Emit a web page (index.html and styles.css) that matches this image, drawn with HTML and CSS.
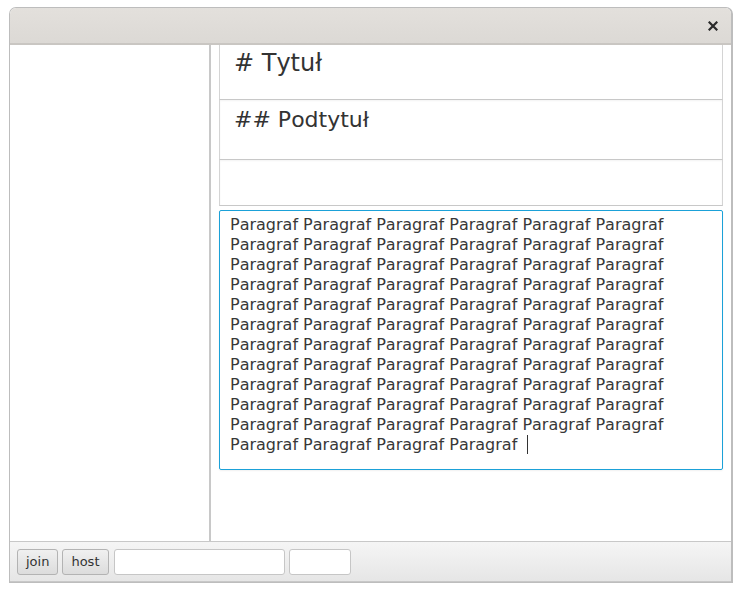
FILE: index.html
```html
<!DOCTYPE html>
<html lang="pl">
<head>
<meta charset="utf-8">
<title>Editor</title>
<link rel="stylesheet" href="styles.css">
</head>
<body>
<div class="window">
  <div class="titlebar">
    <svg class="close" width="10" height="10" viewBox="0 0 10 10"><path d="M1.5 1.5 L8.5 8.5 M8.5 1.5 L1.5 8.5" stroke="#2a2a2a" stroke-width="2.2" stroke-linecap="square"/></svg>
  </div>
  <div class="main">
    <div class="sidebar"></div>
    <div class="content">
      <div class="block block-h1"># Tytuł</div>
      <div class="block block-h2">## Podtytuł</div>
      <div class="block block-empty"></div>
      <div class="para">Paragraf Paragraf Paragraf Paragraf Paragraf Paragraf Paragraf Paragraf Paragraf Paragraf Paragraf Paragraf Paragraf Paragraf Paragraf Paragraf Paragraf Paragraf Paragraf Paragraf Paragraf Paragraf Paragraf Paragraf Paragraf Paragraf Paragraf Paragraf Paragraf Paragraf Paragraf Paragraf Paragraf Paragraf Paragraf Paragraf Paragraf Paragraf Paragraf Paragraf Paragraf Paragraf Paragraf Paragraf Paragraf Paragraf Paragraf Paragraf Paragraf Paragraf Paragraf Paragraf Paragraf Paragraf Paragraf Paragraf Paragraf Paragraf Paragraf Paragraf Paragraf Paragraf Paragraf Paragraf Paragraf Paragraf Paragraf Paragraf Paragraf Paragraf&nbsp;<span class="caret"></span></div>
    </div>
  </div>
  <div class="toolbar">
    <button class="btn">join</button>
    <button class="btn">host</button>
    <div class="field field-wide"></div>
    <div class="field field-narrow"></div>
  </div>
</div>
</body>
</html>
```
FILE: styles.css
```css
* { box-sizing: border-box; }
html, body { margin: 0; padding: 0; background: #ffffff; }
body { font-family: "DejaVu Sans", sans-serif; color: #333333; font-kerning: none; }

.window {
  margin: 7px 0 0 9px;
  width: 724px;
  height: 576px;
  border: 1px solid #bdbdbd;
  border-right-width: 2px;
  border-radius: 7px 7px 0 0;
  display: flex;
  flex-direction: column;
  overflow: hidden;
  background: #ffffff;
}

.titlebar {
  height: 37px;
  flex: none;
  background: linear-gradient(#e3e0dc, #dcd9d5);
  border-bottom: 2px solid #c9c6c2;
  display: flex;
  align-items: center;
  justify-content: flex-end;
  padding: 0 13px 0 0;
}
.close { display: block; margin-top: 1px; }

.main {
  flex: 1;
  display: flex;
  min-height: 0;
}
.sidebar {
  width: 201px;
  flex: none;
  border-right: 2px solid #c8c8c8;
}
.content {
  flex: 1;
  padding: 0 8px 0 8px;
  display: flex;
  flex-direction: column;
}

.block {
  background: #ffffff;
  border-left: 1px solid #d4d4d4;
  border-right: 1px solid #d4d4d4;
  border-bottom: 1px solid #c8c8c8;
  padding: 5px 14px 0 14px;
  color: #333333;
  font-kerning: none;
}
.block-h1 { height: 55px; font-size: 24px; line-height: 26px; padding-top: 5px; }
.block-h2 { height: 60px; font-size: 22px; line-height: 26px; padding-top: 7px; box-shadow: inset 0 1px 2px rgba(0,0,0,0.05); }
.block-empty { height: 46px; box-shadow: inset 0 1px 2px rgba(0,0,0,0.05); }

.para {
  margin-top: 4px;
  height: 260px;
  border: 1px solid #1ba1d8;
  border-radius: 2px;
  box-shadow: 0 1px 2px rgba(0,0,0,0.06);
  padding: 4px 10px 0 10px;
  font-size: 16px;
  line-height: 20px;
  color: #383838;
}
.caret {
  display: inline-block;
  width: 1px;
  height: 19px;
  background: #333333;
  vertical-align: -4px;
  margin-left: 5px;
}

.toolbar {
  height: 41px;
  flex: none;
  border-top: 1px solid #c8c8c8;
  border-bottom: 1px solid #c8c8c8;
  background: linear-gradient(#f5f5f5, #e6e6e6);
  display: flex;
  align-items: center;
  gap: 4px;
  padding: 0 0 0 7px;
}
.btn {
  height: 26px;
  padding: 0 8px;
  margin: 0;
  border: 1px solid #b3b3b3;
  border-radius: 3px;
  background: linear-gradient(#f0f0f0, #dcdcdc);
  font-family: "DejaVu Sans", sans-serif;
  font-size: 13px;
  color: #333333;
}
.field {
  height: 26px;
  border: 1px solid #c6c6c6;
  border-radius: 3px;
  background: #ffffff;
}
.field-wide { width: 171px; margin-left: 1px; }
.field-narrow { width: 62px; }
```
